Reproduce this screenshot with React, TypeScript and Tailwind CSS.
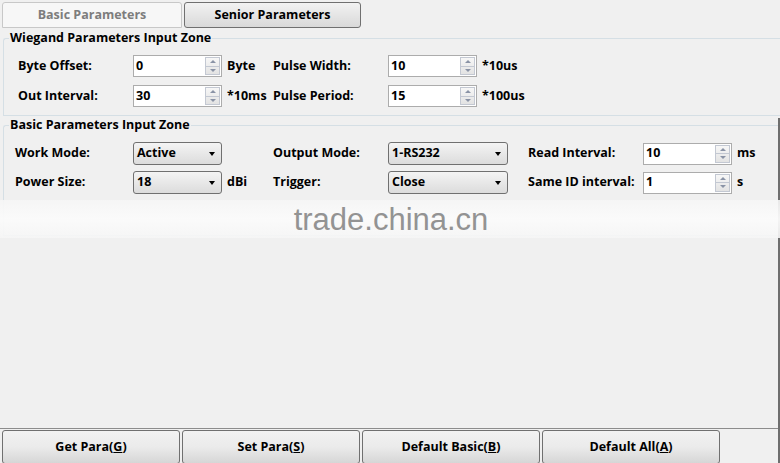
import React from 'react'

const font = { fontFamily: '"Open Sans", "Liberation Sans", sans-serif' }

function Spin({ value, width = 'w-[89px]' }: { value: string; width?: string }) {
  return (
    <div className={`${width} h-[22px] flex items-stretch border border-[#acacac] bg-white`}>
      <div className="flex-1 pl-[2px] flex items-center text-[12.5px] font-bold text-black">{value}</div>
      <div className="w-[15px] my-[1px] mr-[1px] flex flex-col border border-[#c3c8d2] bg-gradient-to-b from-[#f7f7f7] to-[#e3e3e3]">
        <div className="flex-1 flex items-center justify-center border-b border-[#c3c8d2]">
          <div className="w-0 h-0 border-l-[3px] border-r-[3px] border-b-[3px] border-l-transparent border-r-transparent border-b-[#8a93a6]" />
        </div>
        <div className="flex-1 flex items-center justify-center">
          <div className="w-0 h-0 border-l-[3px] border-r-[3px] border-t-[3px] border-l-transparent border-r-transparent border-t-[#8a93a6]" />
        </div>
      </div>
    </div>
  )
}

function Select({ value, width }: { value: string; width: string }) {
  return (
    <div className={`${width} h-[23px] flex items-center justify-between pl-[3px] pr-[6px] rounded-[3px] border border-[#707070] bg-gradient-to-b from-[#f4f4f4] to-[#dcdcdc] text-[12.5px] font-bold text-black`}>
      <span>{value}</span>
      <div className="w-0 h-0 border-l-[3.5px] border-r-[3.5px] border-t-[4px] border-l-transparent border-r-transparent border-t-black" />
    </div>
  )
}

function Label({ children, width }: { children: React.ReactNode; width: string }) {
  return <div className={`${width} shrink-0 whitespace-nowrap text-[12.5px] font-bold text-black`}>{children}</div>
}

function Unit({ children, width }: { children?: React.ReactNode; width: string }) {
  return <div className={`${width} shrink-0 whitespace-nowrap pl-[5px] text-[12.5px] font-bold text-black`}>{children}</div>
}

function Button({ label, accel }: { label: string; accel: string }) {
  return (
    <div className="w-[178px] h-[34px] shrink-0 flex items-center justify-center rounded-[3px] border border-[#707070] bg-gradient-to-b from-[#f2f2f2] via-[#ebebeb] to-[#d6d6d6] text-[12.5px] font-bold text-black">
      {label}(<span className="underline">{accel}</span>)
    </div>
  )
}

export default function App() {
  return (
    <div className="relative w-[780px] h-[463px] overflow-hidden bg-[#f0f0f0] flex flex-col" style={font}>
      {/* tabs */}
      <div className="flex gap-[2px] pl-[2px] pt-[2px] h-[28px]">
        <div className="w-[180px] flex items-center justify-center rounded-t-[3px] border border-[#c8c8c8] bg-[#f7f7f7] text-[12.5px] font-bold text-[#7d7d7d]">
          Basic Parameters
        </div>
        <div className="w-[177px] flex items-center justify-center rounded-[3px] border border-[#707070] bg-gradient-to-b from-[#f2f2f2] to-[#d9d9d9] text-[12.5px] font-bold text-black">
          Senior Parameters
        </div>
      </div>

      {/* Wiegand zone */}
      <div className="relative mt-[10px] ml-[3px] h-[78px] border border-r-0 border-[#d5dfe5] rounded-tl-[3px]">
        <div className="absolute -top-[10px] left-[5px] px-[1px] bg-[#f0f0f0] text-[12.5px] font-bold text-black">
          Wiegand Parameters Input Zone
        </div>
        <div className="flex flex-col gap-[8px] pt-[16px] pl-[14px]">
          <div className="flex items-center">
            <Label width="w-[115px]">Byte Offset:</Label>
            <Spin value="0" />
            <Unit width="w-[51px]">Byte</Unit>
            <Label width="w-[115px]">Pulse Width:</Label>
            <Spin value="10" />
            <Unit width="w-[60px]">*10us</Unit>
          </div>
          <div className="flex items-center">
            <Label width="w-[115px]">Out Interval:</Label>
            <Spin value="30" />
            <Unit width="w-[51px]">*10ms</Unit>
            <Label width="w-[115px]">Pulse Period:</Label>
            <Spin value="15" />
            <Unit width="w-[60px]">*100us</Unit>
          </div>
        </div>
      </div>

      {/* Basic zone */}
      <div className="relative mt-[9px] ml-[3px] h-[111px] border border-r-0 border-[#d5dfe5] rounded-tl-[3px]">
        <div className="absolute -top-[10px] left-[5px] px-[1px] bg-[#f0f0f0] text-[12.5px] font-bold text-black">
          Basic Parameters Input Zone
        </div>
        <div className="flex flex-col gap-[6px] pt-[16px] pl-[11px]">
          <div className="flex items-center">
            <Label width="w-[118px]">Work Mode:</Label>
            <Select value="Active" width="w-[89px]" />
            <Unit width="w-[51px]" />
            <Label width="w-[115px]">Output Mode:</Label>
            <Select value="1-RS232" width="w-[120px]" />
            <div className="w-[20px] shrink-0" />
            <Label width="w-[115px]">Read Interval:</Label>
            <Spin value="10" />
            <Unit width="w-[40px]">ms</Unit>
          </div>
          <div className="flex items-center">
            <Label width="w-[118px]">Power Size:</Label>
            <Select value="18" width="w-[89px]" />
            <Unit width="w-[51px]">dBi</Unit>
            <Label width="w-[115px]">Trigger:</Label>
            <Select value="Close" width="w-[120px]" />
            <div className="w-[20px] shrink-0" />
            <Label width="w-[115px]">Same ID interval:</Label>
            <Spin value="1" />
            <Unit width="w-[40px]">s</Unit>
          </div>
        </div>
      </div>

      <div className="flex-1" />

      {/* bottom buttons */}
      <div className="border-t border-[#8c8c8c] pt-[1px] pl-[2px] flex gap-[2px] h-[35px]">
        <Button label="Get Para" accel="G" />
        <Button label="Set Para" accel="S" />
        <Button label="Default Basic" accel="B" />
        <Button label="Default All" accel="A" />
      </div>

      {/* right window edge */}
      <div className="absolute right-0 top-[118px] bottom-0 w-[2px] bg-[#6e6e6e]" />

      {/* watermark band */}
      <div className="absolute left-0 right-0 top-[200px] h-[38px] bg-gradient-to-b from-[#f6f6f6]/90 via-[#fbfbfb]/95 to-[#f6f6f6]/90 flex items-center justify-center pt-[2px] pl-[2px]">
        <span className="text-[31px] text-[#939393]" style={{ fontFamily: '"Liberation Sans", Arial, sans-serif' }}>
          trade.china.cn
        </span>
      </div>
    </div>
  )
}
